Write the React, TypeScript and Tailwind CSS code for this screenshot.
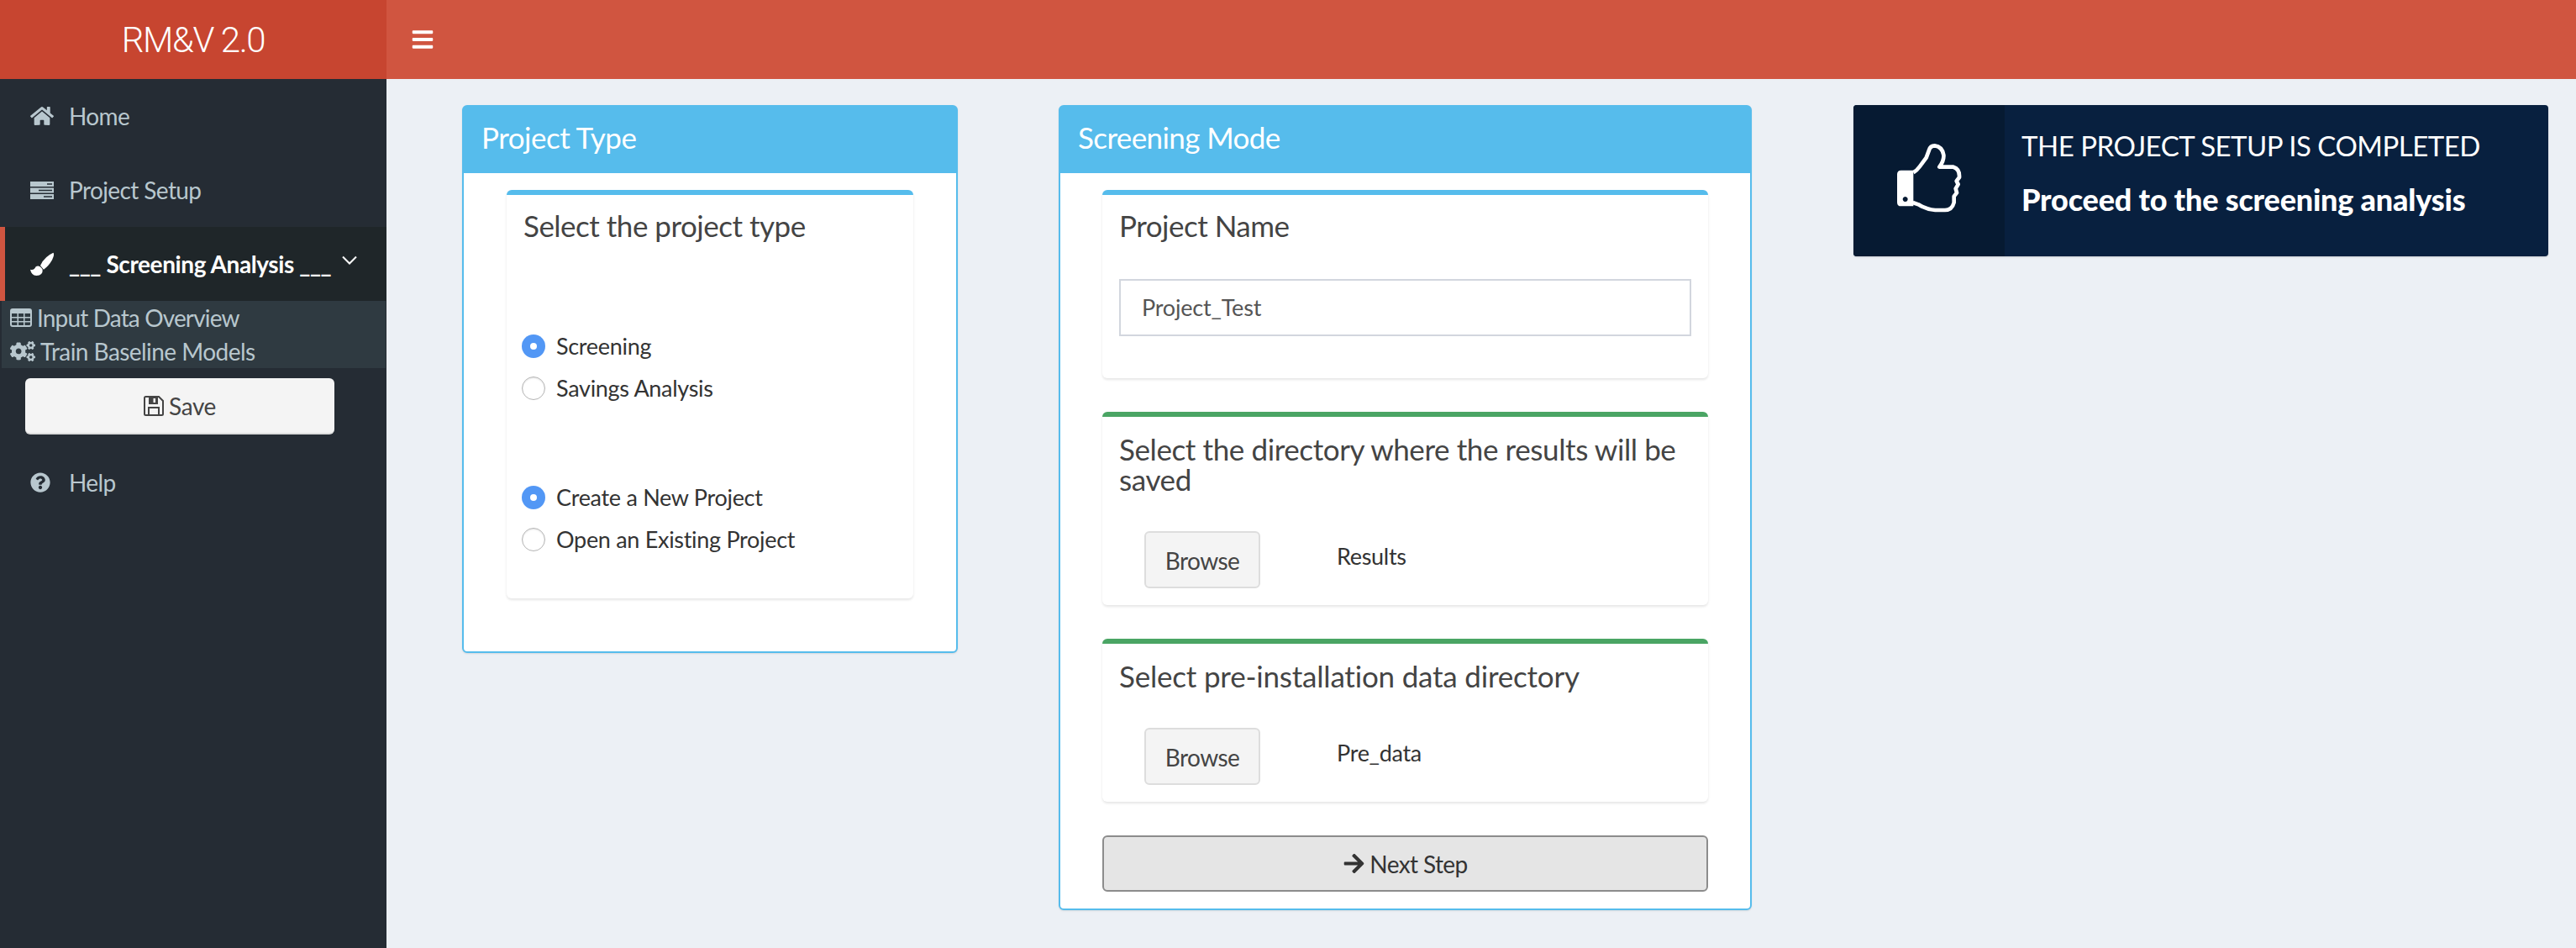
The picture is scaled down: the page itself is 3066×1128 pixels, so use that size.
import React from 'react';
import { FaHome, FaCogs, FaQuestionCircle, FaArrowRight, FaBars } from 'react-icons/fa';

// icons from the old font awesome set, drawn by hand
const ServerIcon: React.FC = () => (
  <svg viewBox="0 0 28 21" className="w-[28px] h-[21px]" fill="currentColor">
    <path fillRule="evenodd" d="M0 0h28v6H0z M20 2.2v1.6h6V2.2z M0 7.5h28v6H0z M10 9.7v1.6h16V9.7z M0 15h28v6H0z M16 17.2v1.6h10v-1.6z" />
  </svg>
);

const BrushIcon: React.FC = () => (
  <svg viewBox="0 0 84 84" className="w-[28px] h-[28px]" fill="currentColor">
    <path d="M82 2Q88 8 78 28Q66 50 48 62L36 48Q42 32 58 18Q72 6 82 2Z" />
    <path d="M0 62Q14 66 20 52Q32 44 44 62Q46 82 22 84Q4 82 0 62Z" />
  </svg>
);

const TableIcon: React.FC = () => (
  <svg viewBox="0 0 26 22" className="w-[26px] h-[22px]" fill="currentColor">
    <path fillRule="evenodd" d="M3 0h20a3 3 0 0 1 3 3v16a3 3 0 0 1-3 3H3a3 3 0 0 1-3-3V3a3 3 0 0 1 3-3z M2 6v4h6.5V6z M10 6v4h6V6z M17.5 6v4H24V6z M2 11.5V15h6.5v-3.5z M10 11.5V15h6v-3.5z M17.5 11.5V15H24v-3.5z M2 16.5V19a1 1 0 0 0 1 1h5.5v-3.5z M10 16.5V20h6v-3.5z M17.5 16.5V20H23a1 1 0 0 0 1-1v-2.5z" />
  </svg>
);

const SaveIcon: React.FC = () => (
  <svg viewBox="0 0 24 24" className="w-[24px] h-[24px]" fill="none" stroke="currentColor" strokeWidth="2">
    <path d="M2.5 1H18l5 5v15.5a1.5 1.5 0 0 1-1.5 1.5h-19A1.5 1.5 0 0 1 1 21.5v-19A1.5 1.5 0 0 1 2.5 1z" />
    <path d="M6 23v-9h12v9" />
    <path fillRule="evenodd" fill="currentColor" stroke="none" d="M6 1h11v9H6z M11.5 3v5H14V3z" />
  </svg>
);

const ThumbIcon: React.FC = () => (
  <svg viewBox="0 0 330 330" className="w-[110px] h-[110px] -ml-[2px] -mt-[8px]">
    <path fill="#fff" fillRule="evenodd" d="M68 140H112V268H68Q54 268 54 254V154Q54 140 68 140z M83 234a9 9 0 1 0 0.01 0z" />
    <path
      fill="none"
      stroke="#fff"
      strokeWidth="14"
      strokeLinejoin="round"
      d="M112 148Q125 140 135 126L158 95L168 68Q172 52 188 52Q215 55 220 85Q222 105 205 128L255 128Q278 135 276 165L266 178L272 190L263 205L267 220L257 233V255Q250 282 225 282H190Q160 280 130 262L110 255"
    />
  </svg>
);

const NavItem: React.FC<{ icon: React.ReactNode; label: string }> = ({ icon, label }) => (
  <div className="h-[88px] flex items-center pl-[36px] text-[#b8c7ce] text-[28px] tracking-[-0.6px]">
    <span className="w-[46px] flex items-center text-[#b8c7ce]">{icon}</span>
    <span>{label}</span>
  </div>
);

const Radio: React.FC<{ checked?: boolean; label: string }> = ({ checked, label }) => (
  <div className="flex items-center h-[50px] pl-[18px] text-[#333] text-[27px] tracking-[-0.3px]">
    {checked ? (
      <span className="w-[28px] h-[28px] rounded-full bg-[#5297f5] flex items-center justify-center">
        <span className="w-[8px] h-[8px] rounded-full bg-white" />
      </span>
    ) : (
      <span className="w-[28px] h-[28px] rounded-full bg-white border border-[#b5b5b5] shadow-[inset_0_1px_2px_rgba(0,0,0,0.12)]" />
    )}
    <span className="ml-[13px]">{label}</span>
  </div>
);

const Card: React.FC<{ color: string; className?: string; children: React.ReactNode }> = ({ color, className, children }) => (
  <div className={`bg-white rounded-[6px] border-t-[6px] shadow-[0_2px_3px_rgba(0,0,0,0.1)] ${color} ${className ?? ''}`}>
    {children}
  </div>
);

const Browse: React.FC<{ name: string }> = ({ name }) => (
  <div className="flex ml-[30px] mt-[44px]">
    <div className="w-[138px] h-[68px] bg-[#f4f4f4] border-2 border-[#ddd] rounded-[6px] flex items-center justify-center text-[#444] text-[28px] tracking-[-0.6px] pt-[1px]">
      Browse
    </div>
    <div className="ml-[91px] mt-[10px] text-[#333] text-[27px] tracking-[-0.3px]">{name}</div>
  </div>
);

export default function App() {
  return (
    <div className="w-[3066px] h-[1128px] flex flex-col overflow-hidden bg-[#ecf0f5] font-['Lato',sans-serif]">
      {/* Header */}
      <div className="h-[94px] flex bg-[#d05540] shrink-0">
        <div className="w-[460px] bg-[#c74530] flex items-center justify-center text-white text-[42px] font-light font-['Roboto',sans-serif] tracking-[-1.4px]">
          RM&amp;V 2.0
        </div>
        <div className="flex items-center pl-[29px] text-white">
          <FaBars size={28} />
        </div>
      </div>

      <div className="flex-1 flex min-h-0">
        {/* Sidebar */}
        <div className="w-[460px] shrink-0 bg-[#252c34]">
          <NavItem icon={<FaHome size={28} />} label="Home" />
          <NavItem icon={<ServerIcon />} label="Project Setup" />
          <div className="h-[88px] flex items-center pl-[30px] bg-[#1f2629] border-l-[6px] border-[#d05540] text-white text-[28px] font-bold tracking-[-0.4px]">
            <span className="w-[46px] flex items-center"><BrushIcon /></span>
            <span>___ Screening Analysis ___</span>
            <svg viewBox="0 0 18 11" className="w-[18px] h-[11px] ml-[13px] -mt-[10px]" fill="none" stroke="currentColor" strokeWidth="2">
              <path d="M1 1.5l8 8 8-8" />
            </svg>
          </div>
          <div className="h-[80px] ml-[2px] mr-[1px] bg-[#2f3a41] text-[#b8c7ce] text-[28px]">
            <div className="h-[40px] flex items-center pl-[10px] tracking-[-0.85px]">
              <TableIcon />
              <span className="ml-[6px]">Input Data Overview</span>
            </div>
            <div className="h-[40px] flex items-center pl-[10px] tracking-[-0.55px]">
              <FaCogs size={30} />
              <span className="ml-[6px]">Train Baseline Models</span>
            </div>
          </div>
          <div className="mt-[12px] ml-[30px] w-[368px] h-[67px] bg-[#f4f4f4] border-b-2 border-[#ddd] rounded-[6px] flex items-center justify-center text-[#444] text-[28px] tracking-[-0.4px]">
            <SaveIcon />
            <span className="ml-[6px]">Save</span>
          </div>
          <div className="mt-[13px]">
            <NavItem icon={<FaQuestionCircle size={24} />} label="Help" />
          </div>
        </div>

        {/* Content */}
        <div className="flex-1 flex items-start pt-[31px] pl-[90px]">
          {/* Project Type */}
          <div className="w-[590px] h-[652px] bg-white border-2 border-[#56bcec] rounded-[6px] shadow-[0_1px_2px_rgba(0,0,0,0.1)]">
            <div className="h-[79px] bg-[#56bcec] flex items-center pl-[21px] pb-[6px] text-white text-[35px] tracking-[-0.5px]">Project Type</div>
            <Card color="border-[#56bcec]" className="mt-[20px] mx-[51px] h-[486px] pt-[12px]">
              <div className="pl-[20px] text-[#444] text-[35px] tracking-[-0.5px] leading-[48px]">Select the project type</div>
              <div className="mt-[95px]"><Radio checked label="Screening" /><Radio label="Savings Analysis" /></div>
              <div className="mt-[80px]"><Radio checked label="Create a New Project" /><Radio label="Open an Existing Project" /></div>
            </Card>
          </div>

          {/* Screening Mode */}
          <div className="ml-[120px] w-[825px] h-[958px] bg-white border-2 border-[#56bcec] rounded-[6px] shadow-[0_1px_2px_rgba(0,0,0,0.1)]">
            <div className="h-[79px] bg-[#56bcec] flex items-center pl-[21px] pb-[6px] text-white text-[35px] tracking-[-0.6px]">Screening Mode</div>
            <div className="px-[50px] pt-[20px]">
              <Card color="border-[#56bcec]" className="h-[224px] pt-[12px] px-[20px]">
                <div className="text-[#444] text-[35px] tracking-[-0.5px] leading-[48px]">Project Name</div>
                <div className="mt-[40px] h-[68px] border-2 border-[#d2d6de] flex items-center pl-[25px] text-[#555] text-[27px] tracking-[-0.2px]">Project_Test</div>
              </Card>
              <Card color="border-[#4aa564]" className="mt-[40px] h-[230px] pt-[20px] px-[20px]">
                <div className="text-[#444] text-[35px] tracking-[-0.4px] leading-[36px]">Select the directory where the results will be saved</div>
                <Browse name="Results" />
              </Card>
              <Card color="border-[#4aa564]" className="mt-[40px] h-[194px] pt-[20px] px-[20px]">
                <div className="text-[#444] text-[35px] tracking-[-0.2px] leading-[36px]">Select pre-installation data directory</div>
                <Browse name="Pre_data" />
              </Card>
              <div className="mt-[40px] h-[67px] bg-[#e5e5e5] border-2 border-[#8c8c8c] rounded-[6px] flex items-center justify-center text-[#333] text-[28px] tracking-[-0.6px]">
                <FaArrowRight size={27} />
                <span className="ml-[5px]">Next Step</span>
              </div>
            </div>
          </div>

          {/* Info box */}
          <div className="ml-[121px] w-[827px] h-[180px] flex bg-[#08203f] rounded-[4px] shadow-[0_1px_2px_rgba(0,0,0,0.15)] overflow-hidden">
            <div className="w-[180px] bg-[#061a32] flex items-center justify-center">
              <ThumbIcon />
            </div>
            <div className="pl-[20px] pt-[28px] text-white">
              <div className="text-[33px] tracking-[-0.5px] leading-[40px]">THE PROJECT SETUP IS COMPLETED</div>
              <div className="mt-[24px] text-[36px] font-black tracking-[-0.2px] leading-[40px] whitespace-nowrap">Proceed to the screening analysis</div>
            </div>
          </div>
        </div>
      </div>
    </div>
  );
}
